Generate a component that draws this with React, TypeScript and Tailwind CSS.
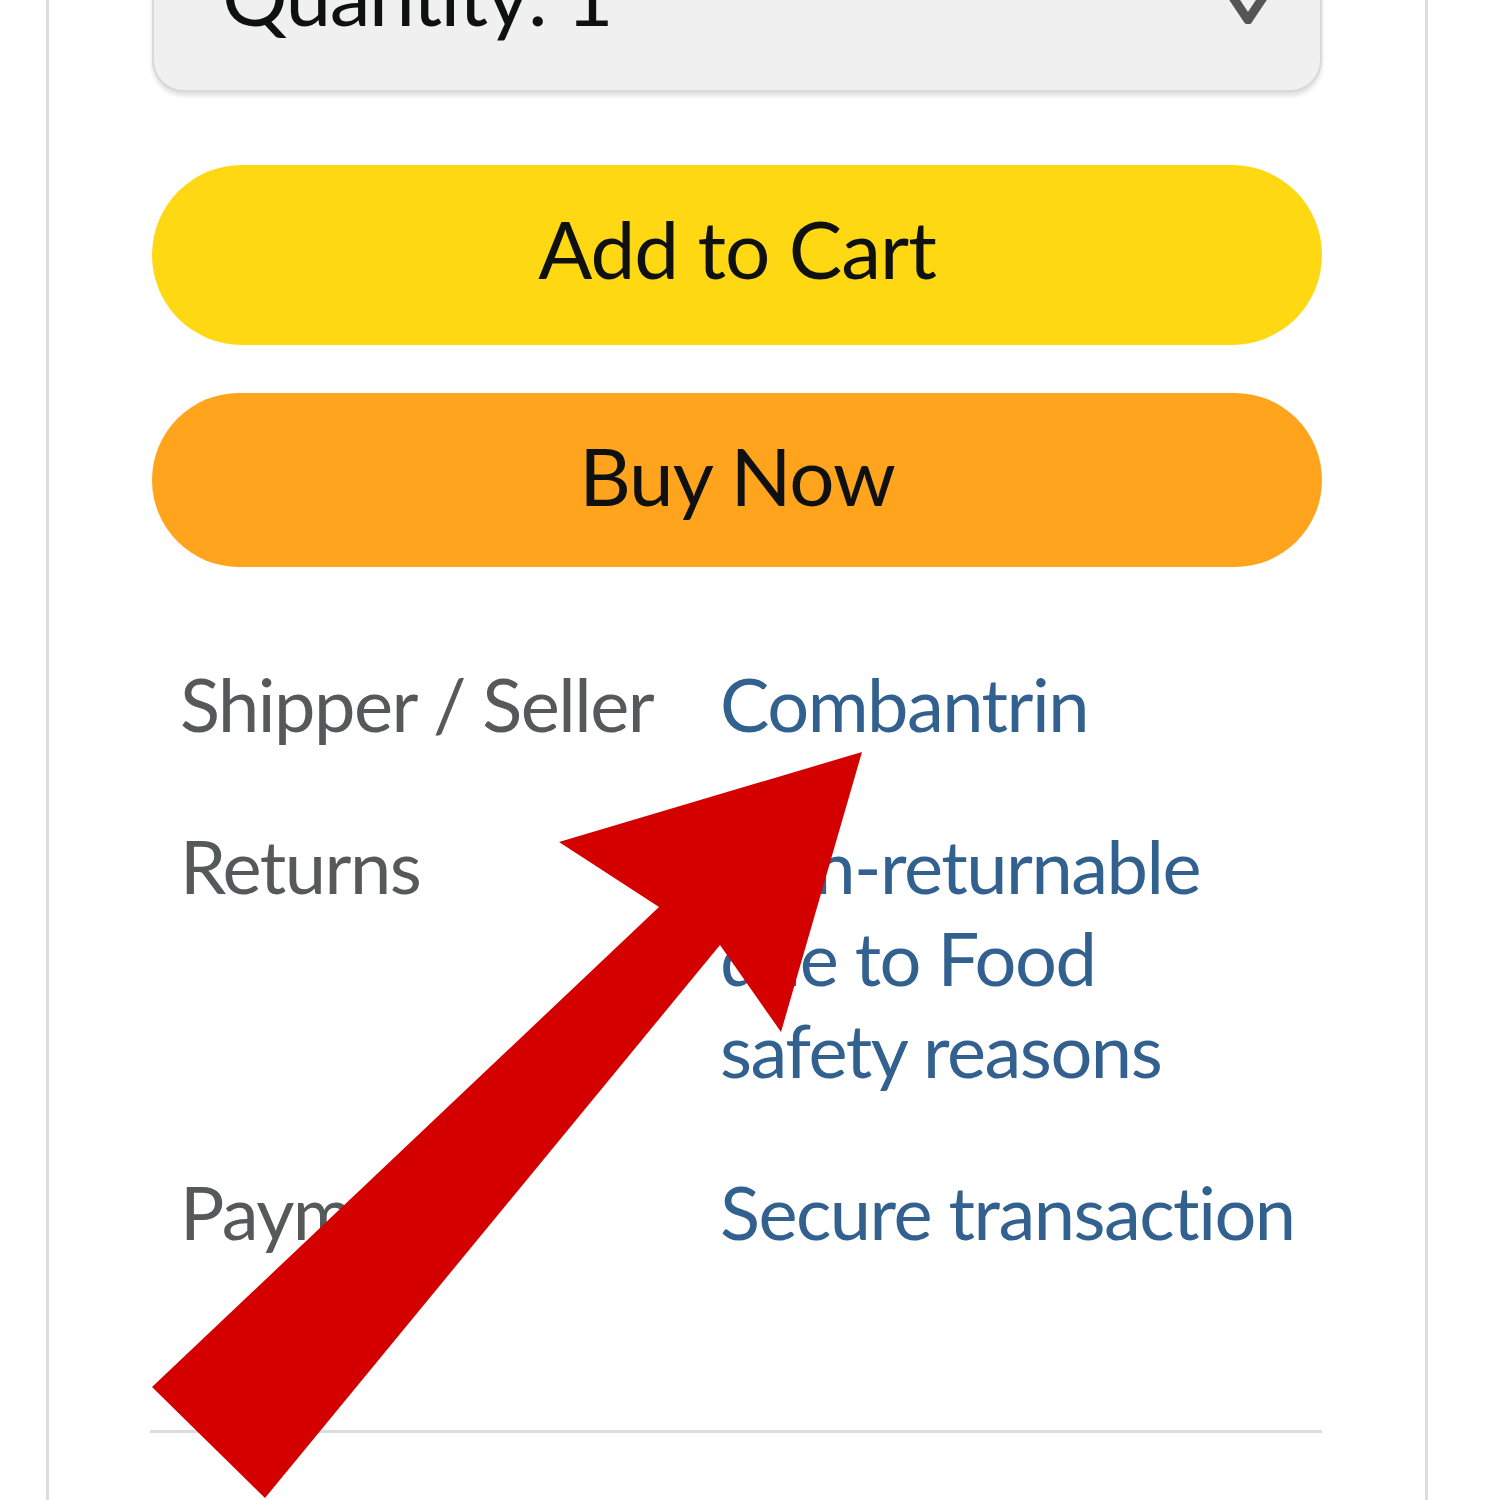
import React from "react";

const rows = [
  { label: "Shipper / Seller", value: ["Combantrin"] },
  { label: "Returns", value: ["Non-returnable", "due to Food", "safety reasons"] },
  { label: "Payment", value: ["Secure transaction"] },
];

export default function App() {
  return (
    <div
      className="relative w-[1500px] h-[1500px] overflow-hidden bg-white"
      style={{ fontFamily: 'Lato, "Noto Sans", sans-serif' }}
    >
      {/* buy box card */}
      <div className="ml-[46px] w-[1382px] h-[1600px] flex flex-col border-x-[3px] border-[#dddddd] pl-[103px] pr-[100px]">
        {/* quantity dropdown, top cut off */}
        <div className="relative -mt-[88px] h-[180px] w-[1170px] shrink-0 rounded-[32px] border-2 border-[#d5d9d9] bg-[#f0f0f0] shadow-[0_4px_4px_rgba(0,0,0,0.12)] flex items-center pl-[68px] pb-[16px]">
          <span className="text-[82px] leading-none tracking-[-1.5px] text-[#0f1111]">Quantity: 1</span>
          <svg
            className="absolute right-[52px] top-[76px]"
            width="40"
            height="34"
            viewBox="0 0 40 34"
          >
            <path d="M4 6 L20 30 L36 6" fill="none" stroke="#555" strokeWidth="9" strokeLinejoin="round" />
          </svg>
        </div>

        <div className="mt-[73px] flex flex-col gap-[48px] w-[1170px]">
          <button className="h-[180px] pb-[14px] rounded-full bg-[#ffd814] text-[#0f1111] text-[80px] leading-none tracking-[-1px]">
            Add to Cart
          </button>
          <button className="h-[174px] pb-[10px] rounded-full bg-[#ffa41c] text-[#0f1111] text-[80px] leading-none tracking-[-1px]">
            Buy Now
          </button>
        </div>

        <div className="mt-[91px] pl-[28px] flex flex-col gap-[70px] text-[74px] leading-[92px] tracking-[-1.5px]">
          {rows.map((r) => (
            <div key={r.label} className="grid grid-cols-[540px_1fr]">
              <div className="text-[#565959] whitespace-nowrap">{r.label}</div>
              <div className="text-[#33618f] whitespace-nowrap">
                {r.value.map((v) => (
                  <div key={v}>{v}</div>
                ))}
              </div>
            </div>
          ))}
        </div>

        <div className="mt-[172px] h-[3px] w-[1172px] -ml-[2px] bg-[#dddddd]" />
      </div>

      {/* red annotation arrow */}
      <svg className="absolute left-0 top-0" width="1500" height="1500" viewBox="0 0 1500 1500">
        <polygon
          points="862,752 781,1032 720,945 265,1498 152,1387 659,907 559,842"
          fill="#d40000"
        />
      </svg>
    </div>
  );
}
